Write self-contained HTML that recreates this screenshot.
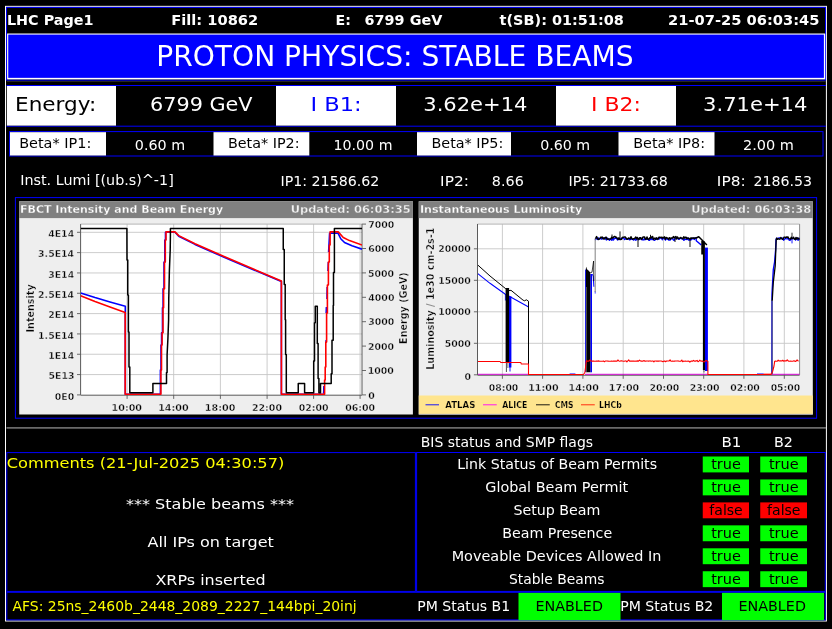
<!DOCTYPE html>
<html lang="en">
<head>
<meta charset="utf-8">
<title>LHC Page1</title>
<style>
html,body{margin:0;padding:0;background:#000;overflow:hidden}
svg{display:block;font-family:"DejaVu Sans","Liberation Sans",sans-serif;will-change:transform;transform:translateZ(0);}
text{white-space:pre}
</style>
</head>
<body>
<svg width="832" height="629" viewBox="0 0 832 629">
<defs>
<clipPath id="cp1"><rect x="80.6" y="224.1" width="281.40" height="171.40"/></clipPath>
<clipPath id="cp2"><rect x="477.5" y="224.1" width="322.10" height="151.50"/></clipPath>
</defs>
<g>
<rect x="0.00" y="0.00" width="832.00" height="629.00" fill="#000" />
<rect x="5.50" y="6.35" width="820.90" height="614.65" fill="none" stroke="#fff" stroke-width="1"/>
<rect x="6.55" y="7.40" width="818.95" height="72.70" fill="none" stroke="#0000ff" stroke-width="1"/>
<line x1="7.00" y1="81.50" x2="826.00" y2="81.50" stroke="#303030" stroke-width="0.8" />
<rect x="7.10" y="33.50" width="818.10" height="45.90" fill="#fff" />
<rect x="8.25" y="34.60" width="815.65" height="43.25" fill="#0000ff" />
<line x1="6.50" y1="85.45" x2="826.00" y2="85.45" stroke="#0000ff" stroke-width="1.1" />
<line x1="6.50" y1="126.20" x2="826.00" y2="126.20" stroke="#0000ff" stroke-width="1" />
<rect x="6.80" y="86.00" width="109.20" height="39.60" fill="#fff" />
<rect x="276.00" y="86.00" width="120.00" height="39.60" fill="#fff" />
<rect x="556.00" y="86.00" width="120.00" height="39.60" fill="#fff" />
<rect x="9.60" y="131.60" width="813.40" height="24.40" fill="none" stroke="#0000ff" stroke-width="1"/>
<rect x="10.00" y="132.20" width="96.00" height="23.30" fill="#fff" />
<rect x="213.50" y="132.20" width="95.80" height="23.30" fill="#fff" />
<rect x="417.00" y="132.20" width="94.00" height="23.30" fill="#fff" />
<rect x="618.50" y="132.20" width="96.00" height="23.30" fill="#fff" />
<rect x="15.40" y="197.60" width="801.20" height="220.60" fill="none" stroke="#0000ff" stroke-width="1"/>
<rect x="19.20" y="201.30" width="393.70" height="213.20" fill="#eeeeee" />
<rect x="19.20" y="201.30" width="393.70" height="16.80" fill="#808080" />
<rect x="80.60" y="224.10" width="281.40" height="170.80" fill="#fff" />
<line x1="127.10" y1="224.10" x2="127.10" y2="394.90" stroke="#c6c6c6" stroke-width="0.9" />
<line x1="173.70" y1="224.10" x2="173.70" y2="394.90" stroke="#c6c6c6" stroke-width="0.9" />
<line x1="220.40" y1="224.10" x2="220.40" y2="394.90" stroke="#c6c6c6" stroke-width="0.9" />
<line x1="267.10" y1="224.10" x2="267.10" y2="394.90" stroke="#c6c6c6" stroke-width="0.9" />
<line x1="313.60" y1="224.10" x2="313.60" y2="394.90" stroke="#c6c6c6" stroke-width="0.9" />
<line x1="360.10" y1="224.10" x2="360.10" y2="394.90" stroke="#c6c6c6" stroke-width="0.9" />
<line x1="80.60" y1="374.57" x2="362.00" y2="374.57" stroke="#c6c6c6" stroke-width="0.9" />
<line x1="80.60" y1="354.25" x2="362.00" y2="354.25" stroke="#c6c6c6" stroke-width="0.9" />
<line x1="80.60" y1="333.93" x2="362.00" y2="333.93" stroke="#c6c6c6" stroke-width="0.9" />
<line x1="80.60" y1="313.60" x2="362.00" y2="313.60" stroke="#c6c6c6" stroke-width="0.9" />
<line x1="80.60" y1="293.27" x2="362.00" y2="293.27" stroke="#c6c6c6" stroke-width="0.9" />
<line x1="80.60" y1="272.95" x2="362.00" y2="272.95" stroke="#c6c6c6" stroke-width="0.9" />
<line x1="80.60" y1="252.62" x2="362.00" y2="252.62" stroke="#c6c6c6" stroke-width="0.9" />
<line x1="80.60" y1="232.30" x2="362.00" y2="232.30" stroke="#c6c6c6" stroke-width="0.9" />
<line x1="80.60" y1="224.10" x2="362.00" y2="224.10" stroke="#b4b4b4" stroke-width="1" />
<line x1="80.60" y1="224.10" x2="80.60" y2="394.90" stroke="#5a5a5a" stroke-width="1" />
<line x1="362.00" y1="224.10" x2="362.00" y2="394.90" stroke="#5a5a5a" stroke-width="1" />
<line x1="80.60" y1="395.20" x2="362.00" y2="395.20" stroke="#5a5a5a" stroke-width="1" />
<polyline points="80.60,293.00 95.00,297.60 110.00,302.00 125.30,306.30 125.30,394.30 159.50,394.30 160.40,394.30 160.40,370.00 161.00,370.00 161.00,345.00 161.60,345.00 161.60,332.80 162.50,332.80 162.50,307.70 163.10,307.70 163.10,288.80 164.00,288.80 164.00,262.00 164.80,262.00 164.80,240.00 165.50,240.00 165.50,232.30 175.00,232.30 178.70,236.20 195.00,244.40 223.50,257.00 281.40,281.60 281.40,394.30 322.60,394.30" fill="none" stroke="#0000ff" stroke-width="1.6" stroke-linejoin="round" clip-path="url(#cp1)"/>
<polyline points="323.20,393.60 323.70,393.00 323.90,386.00" fill="none" stroke="#0000ff" stroke-width="1.6" stroke-linejoin="round" clip-path="url(#cp1)"/>
<polyline points="326.10,342.50 326.20,340.00" fill="none" stroke="#0000ff" stroke-width="1.6" stroke-linejoin="round" clip-path="url(#cp1)"/>
<polyline points="326.20,313.00 326.40,307.00" fill="none" stroke="#0000ff" stroke-width="1.6" stroke-linejoin="round" clip-path="url(#cp1)"/>
<polyline points="327.00,299.00 327.20,287.00" fill="none" stroke="#0000ff" stroke-width="1.6" stroke-linejoin="round" clip-path="url(#cp1)"/>
<polyline points="328.00,271.00 328.40,262.00" fill="none" stroke="#0000ff" stroke-width="1.6" stroke-linejoin="round" clip-path="url(#cp1)"/>
<polyline points="328.60,252.00 329.60,233.40 330.40,233.10 338.00,233.10 340.75,238.75 344.50,242.50 352.00,245.70 362.00,249.20" fill="none" stroke="#0000ff" stroke-width="1.6" stroke-linejoin="round" clip-path="url(#cp1)"/>
<polyline points="80.60,295.80 95.00,301.60 110.00,307.00 125.20,312.50 125.20,394.30 159.80,394.30 160.90,394.30 160.90,370.00 161.50,370.00 161.50,345.00 162.10,345.00 162.10,332.80 163.00,332.80 163.00,307.70 163.60,307.70 163.60,288.80 164.50,288.80 164.50,262.00 165.30,262.00 165.30,240.00 166.00,240.00 166.00,231.90 175.00,231.90 178.75,235.60 195.00,243.75 223.50,256.25 281.40,281.00 281.40,394.30 323.20,394.30 324.60,394.30 324.60,380.00 325.20,380.00 325.20,367.00 325.80,367.00 325.80,342.00 326.60,342.00 326.60,313.00 327.40,313.00 327.40,285.00 328.40,285.00 328.40,262.00 329.30,262.00 329.30,245.00 330.10,245.00 330.10,231.90 338.25,231.90 343.25,237.50 349.50,240.60 362.00,245.00" fill="none" stroke="#ff0000" stroke-width="1.6" stroke-linejoin="round" clip-path="url(#cp1)"/>
<polyline points="80.60,228.50 126.90,228.50 127.00,260.00 127.75,260.00 127.75,295.00 128.40,295.00 128.40,332.00 129.00,332.00 129.00,367.00 129.80,367.00 129.80,392.70 152.90,392.70 152.90,383.40 166.50,383.40 166.50,372.50 167.10,372.50 167.10,355.00 167.90,338.75 168.60,320.00 168.75,299.00 169.40,270.00 170.20,250.00 170.40,236.00 170.40,228.50 283.25,228.50 283.25,249.40 284.25,249.40 284.25,284.40 285.20,284.40 285.20,319.70 285.60,319.70 285.60,354.60 286.30,354.60 286.30,392.70 298.25,392.70 298.25,383.40 304.60,383.40 304.60,392.70 313.70,392.70 313.70,361.00 314.50,361.00 314.50,322.80 315.25,322.80 315.25,306.20 317.30,306.20 317.30,343.50 318.10,343.50 318.10,378.50 318.90,378.50 318.90,392.70 320.50,392.70 320.50,383.40 331.20,383.40 331.20,373.70 332.00,373.70 332.00,340.30 333.20,340.30 333.20,305.40 333.50,305.40 333.50,272.50 334.40,272.50 334.40,228.50 362.00,228.50" fill="none" stroke="#000000" stroke-width="1.5" stroke-linejoin="round" clip-path="url(#cp1)"/>
<line x1="77.00" y1="394.90" x2="80.60" y2="394.90" stroke="#5a5a5a" stroke-width="0.9" />
<line x1="77.00" y1="374.57" x2="80.60" y2="374.57" stroke="#5a5a5a" stroke-width="0.9" />
<line x1="77.00" y1="354.25" x2="80.60" y2="354.25" stroke="#5a5a5a" stroke-width="0.9" />
<line x1="77.00" y1="333.93" x2="80.60" y2="333.93" stroke="#5a5a5a" stroke-width="0.9" />
<line x1="77.00" y1="313.60" x2="80.60" y2="313.60" stroke="#5a5a5a" stroke-width="0.9" />
<line x1="77.00" y1="293.27" x2="80.60" y2="293.27" stroke="#5a5a5a" stroke-width="0.9" />
<line x1="77.00" y1="272.95" x2="80.60" y2="272.95" stroke="#5a5a5a" stroke-width="0.9" />
<line x1="77.00" y1="252.62" x2="80.60" y2="252.62" stroke="#5a5a5a" stroke-width="0.9" />
<line x1="77.00" y1="232.30" x2="80.60" y2="232.30" stroke="#5a5a5a" stroke-width="0.9" />
<line x1="127.10" y1="394.90" x2="127.10" y2="398.90" stroke="#5a5a5a" stroke-width="0.9" />
<line x1="173.70" y1="394.90" x2="173.70" y2="398.90" stroke="#5a5a5a" stroke-width="0.9" />
<line x1="220.40" y1="394.90" x2="220.40" y2="398.90" stroke="#5a5a5a" stroke-width="0.9" />
<line x1="267.10" y1="394.90" x2="267.10" y2="398.90" stroke="#5a5a5a" stroke-width="0.9" />
<line x1="313.60" y1="394.90" x2="313.60" y2="398.90" stroke="#5a5a5a" stroke-width="0.9" />
<line x1="360.10" y1="394.90" x2="360.10" y2="398.90" stroke="#5a5a5a" stroke-width="0.9" />
<line x1="362.00" y1="394.90" x2="366.00" y2="394.90" stroke="#5a5a5a" stroke-width="0.9" />
<line x1="362.00" y1="370.50" x2="366.00" y2="370.50" stroke="#5a5a5a" stroke-width="0.9" />
<line x1="362.00" y1="346.10" x2="366.00" y2="346.10" stroke="#5a5a5a" stroke-width="0.9" />
<line x1="362.00" y1="321.70" x2="366.00" y2="321.70" stroke="#5a5a5a" stroke-width="0.9" />
<line x1="362.00" y1="297.30" x2="366.00" y2="297.30" stroke="#5a5a5a" stroke-width="0.9" />
<line x1="362.00" y1="272.90" x2="366.00" y2="272.90" stroke="#5a5a5a" stroke-width="0.9" />
<line x1="362.00" y1="248.50" x2="366.00" y2="248.50" stroke="#5a5a5a" stroke-width="0.9" />
<line x1="362.00" y1="224.10" x2="366.00" y2="224.10" stroke="#5a5a5a" stroke-width="0.9" />
<rect x="418.75" y="201.30" width="394.05" height="213.20" fill="#eeeeee" />
<rect x="418.75" y="201.30" width="394.05" height="16.80" fill="#808080" />
<rect x="477.50" y="224.10" width="322.10" height="150.70" fill="#fff" />
<line x1="502.40" y1="224.10" x2="502.40" y2="374.80" stroke="#c6c6c6" stroke-width="0.9" />
<line x1="542.60" y1="224.10" x2="542.60" y2="374.80" stroke="#c6c6c6" stroke-width="0.9" />
<line x1="582.90" y1="224.10" x2="582.90" y2="374.80" stroke="#c6c6c6" stroke-width="0.9" />
<line x1="623.20" y1="224.10" x2="623.20" y2="374.80" stroke="#c6c6c6" stroke-width="0.9" />
<line x1="663.50" y1="224.10" x2="663.50" y2="374.80" stroke="#c6c6c6" stroke-width="0.9" />
<line x1="703.70" y1="224.10" x2="703.70" y2="374.80" stroke="#c6c6c6" stroke-width="0.9" />
<line x1="743.90" y1="224.10" x2="743.90" y2="374.80" stroke="#c6c6c6" stroke-width="0.9" />
<line x1="784.30" y1="224.10" x2="784.30" y2="374.80" stroke="#c6c6c6" stroke-width="0.9" />
<line x1="477.50" y1="343.30" x2="799.60" y2="343.30" stroke="#c6c6c6" stroke-width="0.9" />
<line x1="477.50" y1="311.80" x2="799.60" y2="311.80" stroke="#c6c6c6" stroke-width="0.9" />
<line x1="477.50" y1="280.30" x2="799.60" y2="280.30" stroke="#c6c6c6" stroke-width="0.9" />
<line x1="477.50" y1="248.80" x2="799.60" y2="248.80" stroke="#c6c6c6" stroke-width="0.9" />
<line x1="477.50" y1="224.10" x2="799.60" y2="224.10" stroke="#b4b4b4" stroke-width="1" />
<line x1="477.50" y1="224.10" x2="477.50" y2="374.80" stroke="#5a5a5a" stroke-width="1" />
<line x1="799.60" y1="224.10" x2="799.60" y2="374.80" stroke="#8a8a8a" stroke-width="1" />
<line x1="477.50" y1="375.30" x2="799.60" y2="375.30" stroke="#5a5a5a" stroke-width="0.9" />
<polyline points="477.50,273.40 490.00,283.30 505.00,294.00 511.00,297.30 528.20,306.80 528.50,307.00 528.50,374.00" fill="none" stroke="#0000ff" stroke-width="1.05" stroke-linejoin="round" clip-path="url(#cp2)"/>
<rect x="504.90" y="294.00" width="0.90" height="6.50" fill="#0000ff" />
<rect x="509.00" y="296.30" width="2.40" height="71.20" fill="#0000ff" />
<line x1="510.00" y1="367.00" x2="510.00" y2="371.50" stroke="#0000ff" stroke-width="0.9" />
<rect x="585.00" y="269.60" width="0.90" height="102.40" fill="#0000ff" />
<rect x="590.30" y="274.00" width="1.70" height="98.30" fill="#0000ff" />
<polyline points="592.00,274.00 593.20,276.00 593.90,286.80" fill="none" stroke="#0000ff" stroke-width="1.0" stroke-linejoin="round" clip-path="url(#cp2)"/>
<line x1="595.20" y1="291.00" x2="595.20" y2="293.60" stroke="#4a4aff" stroke-width="1.0" />
<polyline points="595.30,240.20 595.90,238.64 596.70,238.19 597.50,239.49 598.30,237.99 599.10,239.19 599.90,238.75 600.70,237.95 601.50,239.12 602.30,237.90 603.10,238.93 603.90,237.98 604.70,238.04 605.50,238.90 606.30,239.95 607.10,238.12 607.90,238.38 608.70,239.43 609.50,240.26 610.30,239.30 611.10,238.83 611.90,240.34 612.70,237.92 613.50,240.03 614.30,238.55 615.10,238.18 615.90,238.11 616.70,238.60 617.50,239.92 618.30,238.27 619.10,239.31 619.90,239.46 620.70,238.77 621.50,239.22 622.30,237.96 623.10,237.95 623.90,238.34 624.70,239.57 625.50,238.91 626.30,238.62 627.10,239.32 627.90,238.98 628.70,238.58 629.50,239.87 630.30,239.62 631.10,238.43 631.90,239.29 632.70,239.17 633.50,240.08 634.30,239.70 635.10,238.55 635.90,240.35 636.70,238.11 637.50,238.89 638.30,239.77 639.10,238.20 639.90,239.07 640.70,237.90 641.50,239.54 642.30,239.79 643.10,239.29 643.90,240.08 644.70,238.62 645.50,239.61 646.30,239.35 647.10,239.31 647.90,238.99 648.70,239.98 649.50,240.26 650.30,239.03 651.10,239.53 651.90,237.96 652.70,239.62 653.50,239.48 654.30,240.38 655.10,239.94 655.90,238.54 656.70,238.80 657.50,239.54 658.30,237.86 659.10,239.00 659.90,238.24 660.70,238.10 661.50,237.95 662.30,239.80 663.10,238.14 663.90,238.44 664.70,238.82 665.50,240.07 666.30,238.01 667.10,238.97 667.90,239.23 668.70,240.10 669.50,239.93 670.30,240.05 671.10,238.52 671.90,238.88 672.70,238.73 673.50,240.10 674.30,240.29 675.10,238.19 675.90,238.26 676.70,238.40 677.50,238.41 678.30,239.06 679.10,239.33 679.90,238.48 680.70,237.81 681.50,238.89 682.30,238.76 683.10,239.27 683.90,240.28 684.70,239.60 685.50,239.14 686.30,239.41 687.10,239.56 687.90,237.94 688.70,240.14 689.50,239.83 690.30,240.07 691.10,239.87 691.90,238.82 692.70,238.84 693.50,238.07 694.30,239.45 695.10,237.96 695.90,237.98 696.20,239.10 696.25,240.75 701.25,245.00" fill="none" stroke="#0000ff" stroke-width="1.4" stroke-linejoin="round" clip-path="url(#cp2)"/>
<rect x="705.00" y="247.60" width="2.90" height="123.40" fill="#0000ff" />
<polyline points="771.90,374.00 772.00,293.60 773.30,269.70 774.60,262.00 775.60,250.00 776.00,240.00 776.40,238.44 777.20,238.32 778.00,238.78 778.80,238.04 779.60,237.90 780.40,238.29 781.20,238.16 782.00,238.85 782.80,237.97 783.60,240.17 784.40,239.50 785.20,238.29 786.00,238.56 786.80,238.80 787.60,238.85 788.40,238.22 789.20,240.11 790.00,240.48 790.80,239.11 791.60,239.16 792.40,238.12 793.20,238.17 794.00,238.79 794.80,238.59 795.60,240.06 796.40,238.32 797.20,237.96 798.00,240.37 798.80,239.27 799.60,238.28 799.60,239.20" fill="none" stroke="#0000ff" stroke-width="1.4" stroke-linejoin="round" clip-path="url(#cp2)"/>
<line x1="792.00" y1="238.20" x2="792.00" y2="243.40" stroke="#0000ff" stroke-width="0.9" />
<line x1="569.60" y1="374.10" x2="575.40" y2="374.10" stroke="#0000ff" stroke-width="1.2" />
<line x1="757.00" y1="374.10" x2="763.70" y2="374.10" stroke="#0000ff" stroke-width="1.2" />
<line x1="477.50" y1="374.30" x2="528.50" y2="374.30" stroke="#cc00cc" stroke-width="1.0" />
<line x1="585.00" y1="374.30" x2="707.90" y2="374.30" stroke="#cc00cc" stroke-width="1.0" />
<line x1="771.00" y1="374.30" x2="799.60" y2="374.30" stroke="#cc00cc" stroke-width="1.0" />
<polyline points="477.50,264.75 490.00,276.00 505.30,288.40 508.80,290.60 511.00,290.30 523.10,300.20 524.70,300.80 526.30,299.80 528.50,301.20 528.50,374.50" fill="none" stroke="#000" stroke-width="1.0" stroke-linejoin="round" clip-path="url(#cp2)"/>
<rect x="505.60" y="288.00" width="3.50" height="74.00" fill="#000" />
<line x1="506.40" y1="362.00" x2="506.40" y2="372.00" stroke="#000" stroke-width="0.7" />
<line x1="507.90" y1="362.00" x2="507.90" y2="368.00" stroke="#000" stroke-width="0.6" />
<polygon points="585.9,372.3 585.9,268.2 586.2,266.8 587.0,269.2 588.5,270.6 590.3,272.6 590.3,372.3" fill="#000"/>
<line x1="586.35" y1="287.00" x2="586.35" y2="372.00" stroke="#c8c8c8" stroke-width="0.45" />
<polyline points="590.30,272.60 592.00,272.20 593.60,261.00 593.85,281.00" fill="none" stroke="#000" stroke-width="0.75" stroke-linejoin="round" clip-path="url(#cp2)"/>
<line x1="595.20" y1="292.00" x2="595.20" y2="238.20" stroke="#8c8c8c" stroke-width="1.1" />
<polyline points="595.20,238.20 595.80,238.13 596.60,236.58 597.40,238.08 598.20,239.44 599.00,239.09 599.80,238.59 600.60,237.28 601.40,237.60 602.20,237.00 603.00,238.82 603.80,238.10 604.60,238.84 605.40,237.49 606.20,237.17 607.00,238.93 607.80,239.45 608.60,239.06 609.40,238.92 610.20,238.95 611.00,238.72 611.80,237.18 612.60,238.05 613.40,237.57 614.20,236.59 615.00,236.58 615.80,237.34 616.60,237.28 617.40,238.58 618.20,239.37 619.00,237.84 619.80,239.31 620.60,239.46 621.40,239.37 622.20,237.59 623.00,237.16 623.80,237.18 624.60,237.09 625.40,237.11 626.20,238.37 627.00,239.20 627.80,239.02 628.60,237.94 629.40,238.46 630.20,238.90 631.00,236.75 631.80,238.48 632.60,239.23 633.40,238.85 634.20,238.75 635.00,237.93 635.80,237.04 636.60,238.87 637.40,237.50 638.20,238.90 639.00,239.41 639.80,237.69 640.60,237.70 641.40,239.34 642.20,238.67 643.00,237.01 643.80,236.88 644.60,236.95 645.40,239.21 646.20,238.92 647.00,236.94 647.80,238.98 648.60,239.44 649.40,238.47 650.20,237.55 651.00,238.15 651.80,236.89 652.60,236.54 653.40,239.41 654.20,238.45 655.00,238.08 655.80,239.30 656.60,237.80 657.40,239.12 658.20,238.98 659.00,237.13 659.80,237.26 660.60,237.38 661.40,237.22 662.20,238.26 663.00,237.28 663.80,237.76 664.60,236.89 665.40,239.23 666.20,237.56 667.00,237.87 667.80,238.25 668.60,239.21 669.40,237.76 670.20,239.25 671.00,238.00 671.80,238.10 672.60,238.07 673.40,236.56 674.20,237.82 675.00,237.05 675.80,236.51 676.60,238.90 677.40,237.02 678.20,237.92 679.00,238.68 679.80,238.17 680.60,237.48 681.40,238.06 682.20,238.17 683.00,238.85 683.80,236.82 684.60,238.18 685.40,237.25 686.20,237.33 687.00,238.82 687.80,238.02 688.60,238.19 689.40,238.78 690.20,239.24 691.00,237.83 691.80,238.34 692.60,238.02 693.40,238.04 694.20,238.58 695.00,237.86 695.80,238.10 696.20,238.00 698.75,236.75 702.50,240.50 706.90,245.00" fill="none" stroke="#000" stroke-width="1.5" stroke-linejoin="round" clip-path="url(#cp2)"/>
<line x1="620.00" y1="238.20" x2="620.00" y2="231.40" stroke="#000" stroke-width="0.95" />
<line x1="638.00" y1="238.20" x2="638.00" y2="247.00" stroke="#000" stroke-width="0.95" />
<line x1="690.00" y1="238.20" x2="690.00" y2="247.00" stroke="#000" stroke-width="0.95" />
<line x1="612.00" y1="238.20" x2="612.00" y2="234.50" stroke="#000" stroke-width="0.95" />
<line x1="650.50" y1="238.20" x2="650.50" y2="234.80" stroke="#000" stroke-width="0.95" />
<line x1="675.00" y1="238.20" x2="675.00" y2="242.00" stroke="#000" stroke-width="0.95" />
<polygon points="701.25,240.75 704.9,241.6 705.0,370 702.9,370 702.9,254.5 701.25,254.5" fill="#000"/>
<line x1="704.00" y1="370.00" x2="704.00" y2="372.50" stroke="#000" stroke-width="0.6" />
<polyline points="772.20,301.00 773.30,282.30 775.20,266.00 776.20,239.60 776.80,238.04 777.60,239.34 778.40,238.66 779.20,239.15 780.00,239.34 780.80,237.43 781.60,238.27 782.40,239.34 783.20,239.05 784.00,237.08 784.80,237.04 785.60,237.94 786.40,236.90 787.20,237.37 788.00,236.90 788.80,238.57 789.60,238.90 790.40,239.21 791.20,237.13 792.00,238.71 792.80,238.55 793.60,237.10 794.40,239.17 795.20,239.41 796.00,237.31 796.80,239.37 797.60,237.82 798.40,238.06 799.20,239.47 799.60,238.10" fill="none" stroke="#000" stroke-width="1.3" stroke-linejoin="round" clip-path="url(#cp2)"/>
<line x1="792.00" y1="238.20" x2="792.00" y2="232.70" stroke="#000" stroke-width="0.8" />
<line x1="772.10" y1="374.50" x2="772.10" y2="300.00" stroke="#555" stroke-width="0.9" />
<polyline points="477.50,361.50 500.00,361.50 500.80,362.40 520.90,362.50 521.20,363.90 528.50,364.00 528.50,374.50 583.50,374.50 584.90,372.50 585.70,366.00 586.30,360.90 587.30,361.12 588.20,361.14 589.10,360.93 590.00,359.91 590.90,360.99 591.80,361.09 592.70,361.09 593.60,360.96 594.50,361.25 595.40,361.20 596.30,360.93 597.20,361.14 598.10,360.91 599.00,361.09 599.90,361.25 600.80,361.27 601.70,361.22 602.60,361.27 603.50,360.94 604.40,361.73 605.30,361.07 606.20,361.02 607.10,361.05 608.00,361.13 608.90,361.26 609.80,361.27 610.70,361.30 611.60,360.97 612.50,361.29 613.40,361.13 614.30,360.98 615.20,361.13 616.10,360.93 617.00,361.30 617.90,359.94 618.80,360.96 619.70,361.21 620.60,360.92 621.50,360.92 622.40,361.03 623.30,361.29 624.20,361.30 625.10,360.93 626.00,360.91 626.90,361.84 627.80,360.96 628.70,359.89 629.60,361.28 630.50,361.05 631.40,361.11 632.30,361.14 633.20,361.15 634.10,361.10 635.00,361.19 635.90,361.02 636.80,361.11 637.70,360.90 638.60,361.13 639.50,360.07 640.40,360.92 641.30,361.09 642.20,361.04 643.10,361.20 644.00,360.46 644.90,361.29 645.80,361.08 646.70,361.03 647.60,361.03 648.50,361.14 649.40,361.05 650.30,360.91 651.20,361.19 652.10,360.99 653.00,361.00 653.90,361.86 654.80,360.94 655.70,361.03 656.60,361.08 657.50,360.97 658.40,361.16 659.30,361.08 660.20,360.95 661.10,360.98 662.00,361.24 662.90,361.77 663.80,361.16 664.70,361.04 665.60,361.78 666.50,361.01 667.40,361.07 668.30,361.06 669.20,360.96 670.10,359.84 671.00,361.29 671.90,361.28 672.80,360.99 673.70,361.23 674.60,361.11 675.50,361.04 676.40,360.93 677.30,361.01 678.20,360.92 679.10,361.18 680.00,361.26 680.90,361.13 681.80,359.98 682.70,361.78 683.60,361.11 684.50,361.28 685.40,361.04 686.30,361.24 687.20,361.21 688.10,360.98 689.00,361.23 689.90,362.08 690.80,361.22 691.70,360.90 692.60,361.25 693.50,360.31 694.40,361.11 695.30,361.09 696.20,360.90 697.10,360.41 698.00,361.64 698.90,361.24 699.80,360.15 700.70,361.03 701.60,361.16 702.50,361.04 703.40,361.80 704.30,361.93 705.20,361.05 706.10,360.38 707.00,361.14 707.60,361.10 707.90,361.20 707.90,374.50 771.00,374.50 772.60,371.50 774.00,366.00 774.70,361.20 775.50,361.10 776.40,361.18 777.30,361.17 778.20,360.07 779.10,361.06 780.00,360.85 780.90,360.90 781.80,361.03 782.70,360.25 783.60,361.17 784.50,360.86 785.40,360.86 786.30,360.85 787.20,359.79 788.10,360.89 789.00,361.15 789.90,361.18 790.80,361.07 791.70,361.18 792.60,361.19 793.50,360.92 794.40,360.87 795.30,361.54 796.20,361.04 797.10,359.93 798.00,360.92 798.70,361.00" fill="none" stroke="#ff0000" stroke-width="1.1" stroke-linejoin="round" clip-path="url(#cp2)"/>
<line x1="763.70" y1="374.30" x2="771.00" y2="374.30" stroke="#ff0000" stroke-width="1.3" />
<line x1="477.50" y1="224.10" x2="477.50" y2="374.80" stroke="#5a5a5a" stroke-width="1" />
<line x1="473.90" y1="374.80" x2="477.50" y2="374.80" stroke="#5a5a5a" stroke-width="0.9" />
<line x1="473.90" y1="343.30" x2="477.50" y2="343.30" stroke="#5a5a5a" stroke-width="0.9" />
<line x1="473.90" y1="311.80" x2="477.50" y2="311.80" stroke="#5a5a5a" stroke-width="0.9" />
<line x1="473.90" y1="280.30" x2="477.50" y2="280.30" stroke="#5a5a5a" stroke-width="0.9" />
<line x1="473.90" y1="248.80" x2="477.50" y2="248.80" stroke="#5a5a5a" stroke-width="0.9" />
<line x1="502.40" y1="374.80" x2="502.40" y2="378.80" stroke="#5a5a5a" stroke-width="0.9" />
<line x1="542.60" y1="374.80" x2="542.60" y2="378.80" stroke="#5a5a5a" stroke-width="0.9" />
<line x1="582.90" y1="374.80" x2="582.90" y2="378.80" stroke="#5a5a5a" stroke-width="0.9" />
<line x1="623.20" y1="374.80" x2="623.20" y2="378.80" stroke="#5a5a5a" stroke-width="0.9" />
<line x1="663.50" y1="374.80" x2="663.50" y2="378.80" stroke="#5a5a5a" stroke-width="0.9" />
<line x1="703.70" y1="374.80" x2="703.70" y2="378.80" stroke="#5a5a5a" stroke-width="0.9" />
<line x1="743.90" y1="374.80" x2="743.90" y2="378.80" stroke="#5a5a5a" stroke-width="0.9" />
<line x1="784.30" y1="374.80" x2="784.30" y2="378.80" stroke="#5a5a5a" stroke-width="0.9" />
<rect x="418.75" y="395.50" width="394.05" height="18.60" fill="#ffe58e" />
<line x1="418.75" y1="414.30" x2="812.80" y2="414.30" stroke="#b8bcc8" stroke-width="0.7" />
<line x1="425.50" y1="404.80" x2="439.00" y2="404.80" stroke="#0000ff" stroke-width="0.9" />
<line x1="483.00" y1="404.80" x2="496.75" y2="404.80" stroke="#ff00ff" stroke-width="0.9" />
<line x1="536.00" y1="404.80" x2="549.75" y2="404.80" stroke="#000000" stroke-width="0.9" />
<line x1="581.00" y1="404.80" x2="594.75" y2="404.80" stroke="#ff1800" stroke-width="0.9" />
<line x1="6.50" y1="427.80" x2="826.00" y2="427.80" stroke="#6a6a6a" stroke-width="1.8" />
<rect x="6.80" y="452.60" width="408.60" height="138.80" fill="none" stroke="#0000ff" stroke-width="1"/>
<rect x="416.60" y="452.50" width="408.70" height="138.90" fill="none" stroke="#0000ff" stroke-width="1"/>
<rect x="702.75" y="456.50" width="46.25" height="15.90" fill="#00ff00" />
<rect x="760.25" y="456.50" width="46.75" height="15.90" fill="#00ff00" />
<rect x="702.75" y="479.45" width="46.25" height="15.90" fill="#00ff00" />
<rect x="760.25" y="479.45" width="46.75" height="15.90" fill="#00ff00" />
<rect x="702.75" y="502.40" width="46.25" height="15.90" fill="#ff0000" />
<rect x="760.25" y="502.40" width="46.75" height="15.90" fill="#ff0000" />
<rect x="702.75" y="525.35" width="46.25" height="15.90" fill="#00ff00" />
<rect x="760.25" y="525.35" width="46.75" height="15.90" fill="#00ff00" />
<rect x="702.75" y="548.30" width="46.25" height="15.90" fill="#00ff00" />
<rect x="760.25" y="548.30" width="46.75" height="15.90" fill="#00ff00" />
<rect x="702.75" y="571.25" width="46.25" height="15.90" fill="#00ff00" />
<rect x="760.25" y="571.25" width="46.75" height="15.90" fill="#00ff00" />
<rect x="6.80" y="592.30" width="818.50" height="27.60" fill="none" stroke="#0000ff" stroke-width="1"/>
<rect x="518.50" y="592.90" width="102.00" height="27.30" fill="#00ff00" />
<rect x="722.00" y="592.90" width="102.00" height="27.30" fill="#00ff00" />
</g>
<g>
<text x="6.96" y="24.75" fill="#fff" textLength="86.49" lengthAdjust="spacingAndGlyphs" style="font-size:13.6px;font-weight:bold;">LHC Page1</text>
<text x="171.18" y="24.75" fill="#fff" textLength="87.08" lengthAdjust="spacingAndGlyphs" style="font-size:13.6px;font-weight:bold;">Fill: 10862</text>
<text x="335.48" y="24.75" fill="#fff" textLength="15.33" lengthAdjust="spacingAndGlyphs" style="font-size:13.6px;font-weight:bold;">E:</text>
<text x="364.64" y="24.75" fill="#fff" textLength="77.67" lengthAdjust="spacingAndGlyphs" style="font-size:13.6px;font-weight:bold;">6799 GeV</text>
<text x="499.61" y="24.75" fill="#fff" textLength="124.20" lengthAdjust="spacingAndGlyphs" style="font-size:13.6px;font-weight:bold;">t(SB): 01:51:08</text>
<text x="667.97" y="24.75" fill="#fff" textLength="151.49" lengthAdjust="spacingAndGlyphs" style="font-size:13.6px;font-weight:bold;">21-07-25 06:03:45</text>
<text x="156.22" y="65.50" fill="#fff" textLength="477.32" lengthAdjust="spacingAndGlyphs" style="font-size:28px;">PROTON PHYSICS: STABLE BEAMS</text>
<text x="15.06" y="110.70" fill="#000" textLength="81.14" lengthAdjust="spacingAndGlyphs" style="font-size:20px;">Energy:</text>
<text x="150.00" y="110.70" fill="#fff" textLength="102.58" lengthAdjust="spacingAndGlyphs" style="font-size:20px;">6799 GeV</text>
<text x="310.47" y="110.70" fill="#0000ff" textLength="51.19" lengthAdjust="spacingAndGlyphs" style="font-size:20px;">I B1:</text>
<text x="423.28" y="110.70" fill="#fff" textLength="104.20" lengthAdjust="spacingAndGlyphs" style="font-size:20px;">3.62e+14</text>
<text x="591.03" y="110.70" fill="#ff0000" textLength="49.82" lengthAdjust="spacingAndGlyphs" style="font-size:20px;">I B2:</text>
<text x="703.02" y="110.70" fill="#fff" textLength="104.45" lengthAdjust="spacingAndGlyphs" style="font-size:20px;">3.71e+14</text>
<text x="19.20" y="148.00" fill="#000" textLength="72.09" lengthAdjust="spacingAndGlyphs" style="font-size:13.2px;">Beta* IP1:</text>
<text x="227.96" y="148.00" fill="#000" textLength="71.57" lengthAdjust="spacingAndGlyphs" style="font-size:13.2px;">Beta* IP2:</text>
<text x="431.46" y="148.00" fill="#000" textLength="71.83" lengthAdjust="spacingAndGlyphs" style="font-size:13.2px;">Beta* IP5:</text>
<text x="633.21" y="148.00" fill="#000" textLength="71.83" lengthAdjust="spacingAndGlyphs" style="font-size:13.2px;">Beta* IP8:</text>
<text x="134.89" y="149.80" fill="#fff" textLength="50.31" lengthAdjust="spacingAndGlyphs" style="font-size:13.2px;">0.60 m</text>
<text x="333.58" y="149.80" fill="#fff" textLength="58.86" lengthAdjust="spacingAndGlyphs" style="font-size:13.2px;">10.00 m</text>
<text x="540.15" y="149.80" fill="#fff" textLength="50.05" lengthAdjust="spacingAndGlyphs" style="font-size:13.2px;">0.60 m</text>
<text x="742.99" y="149.80" fill="#fff" textLength="50.98" lengthAdjust="spacingAndGlyphs" style="font-size:13.2px;">2.00 m</text>
<text x="20.21" y="185.00" fill="#fff" textLength="153.54" lengthAdjust="spacingAndGlyphs" style="font-size:13.6px;">Inst. Lumi [(ub.s)^-1]</text>
<text x="280.47" y="186.30" fill="#fff" textLength="98.90" lengthAdjust="spacingAndGlyphs" style="font-size:13.6px;">IP1: 21586.62</text>
<text x="440.12" y="186.30" fill="#fff" textLength="28.78" lengthAdjust="spacingAndGlyphs" style="font-size:13.6px;">IP2:</text>
<text x="491.89" y="186.30" fill="#fff" textLength="31.92" lengthAdjust="spacingAndGlyphs" style="font-size:13.6px;">8.66</text>
<text x="568.46" y="186.30" fill="#fff" textLength="99.48" lengthAdjust="spacingAndGlyphs" style="font-size:13.6px;">IP5: 21733.68</text>
<text x="716.87" y="186.30" fill="#fff" textLength="28.78" lengthAdjust="spacingAndGlyphs" style="font-size:13.6px;">IP8:</text>
<text x="753.51" y="186.30" fill="#fff" textLength="58.57" lengthAdjust="spacingAndGlyphs" style="font-size:13.6px;">2186.53</text>
<text x="20.01" y="213.20" fill="#fff" style="font-size:11px;font-weight:bold;stroke:#808080;stroke-width:0.3px;">FBCT Intensity and Beam Energy</text>
<text x="290.72" y="213.20" fill="#f2f2f2" textLength="120.03" lengthAdjust="spacingAndGlyphs" style="font-size:11px;font-weight:bold;stroke:#808080;stroke-width:0.3px;">Updated: 06:03:35</text>
<text x="54.73" y="399.70" fill="#000" style="font-size:9.4px;font-weight:bold;stroke:#eeeeee;stroke-width:0.35px;">0E0</text>
<text x="48.47" y="379.38" fill="#000" style="font-size:9.4px;font-weight:bold;stroke:#eeeeee;stroke-width:0.35px;">5E13</text>
<text x="48.19" y="359.05" fill="#000" style="font-size:9.4px;font-weight:bold;stroke:#eeeeee;stroke-width:0.35px;">1E14</text>
<text x="38.08" y="338.73" fill="#000" style="font-size:9.4px;font-weight:bold;stroke:#eeeeee;stroke-width:0.35px;">1.5E14</text>
<text x="48.19" y="318.40" fill="#000" style="font-size:9.4px;font-weight:bold;stroke:#eeeeee;stroke-width:0.35px;">2E14</text>
<text x="38.08" y="298.07" fill="#000" style="font-size:9.4px;font-weight:bold;stroke:#eeeeee;stroke-width:0.35px;">2.5E14</text>
<text x="48.19" y="277.75" fill="#000" style="font-size:9.4px;font-weight:bold;stroke:#eeeeee;stroke-width:0.35px;">3E14</text>
<text x="38.08" y="257.43" fill="#000" style="font-size:9.4px;font-weight:bold;stroke:#eeeeee;stroke-width:0.35px;">3.5E14</text>
<text x="48.19" y="237.10" fill="#000" style="font-size:9.4px;font-weight:bold;stroke:#eeeeee;stroke-width:0.35px;">4E14</text>
<text x="111.55" y="410.80" fill="#000" textLength="30.49" lengthAdjust="spacingAndGlyphs" style="font-size:9.4px;font-weight:bold;stroke:#eeeeee;stroke-width:0.35px;">10:00</text>
<text x="158.15" y="410.80" fill="#000" textLength="30.49" lengthAdjust="spacingAndGlyphs" style="font-size:9.4px;font-weight:bold;stroke:#eeeeee;stroke-width:0.35px;">14:00</text>
<text x="204.85" y="410.80" fill="#000" textLength="30.49" lengthAdjust="spacingAndGlyphs" style="font-size:9.4px;font-weight:bold;stroke:#eeeeee;stroke-width:0.35px;">18:00</text>
<text x="251.94" y="410.80" fill="#000" textLength="30.09" lengthAdjust="spacingAndGlyphs" style="font-size:9.4px;font-weight:bold;stroke:#eeeeee;stroke-width:0.35px;">22:00</text>
<text x="298.73" y="410.80" fill="#000" style="font-size:9.4px;font-weight:bold;stroke:#eeeeee;stroke-width:0.35px;">02:00</text>
<text x="345.23" y="410.80" fill="#000" style="font-size:9.4px;font-weight:bold;stroke:#eeeeee;stroke-width:0.35px;">06:00</text>
<text x="368.32" y="398.50" fill="#000" style="font-size:9.4px;font-weight:bold;stroke:#eeeeee;stroke-width:0.35px;">0</text>
<text x="367.67" y="374.10" fill="#000" style="font-size:9.4px;font-weight:bold;stroke:#eeeeee;stroke-width:0.35px;">1000</text>
<text x="368.04" y="349.70" fill="#000" style="font-size:9.4px;font-weight:bold;stroke:#eeeeee;stroke-width:0.35px;">2000</text>
<text x="368.14" y="325.30" fill="#000" style="font-size:9.4px;font-weight:bold;stroke:#eeeeee;stroke-width:0.35px;">3000</text>
<text x="368.32" y="300.90" fill="#000" style="font-size:9.4px;font-weight:bold;stroke:#eeeeee;stroke-width:0.35px;">4000</text>
<text x="368.04" y="276.50" fill="#000" style="font-size:9.4px;font-weight:bold;stroke:#eeeeee;stroke-width:0.35px;">5000</text>
<text x="368.14" y="252.10" fill="#000" style="font-size:9.4px;font-weight:bold;stroke:#eeeeee;stroke-width:0.35px;">6000</text>
<text x="368.14" y="227.70" fill="#000" style="font-size:9.4px;font-weight:bold;stroke:#eeeeee;stroke-width:0.35px;">7000</text>
<text transform="translate(30.00,308.00) rotate(-90)" x="-24.47" y="3.50" fill="#000" style="font-size:9.6px;font-weight:bold;stroke:#eeeeee;stroke-width:0.35px;">Intensity</text>
<text transform="translate(403.50,308.00) rotate(-90)" x="-35.91" y="3.50" fill="#000" style="font-size:9.6px;font-weight:bold;stroke:#eeeeee;stroke-width:0.35px;">Energy (GeV)</text>
<text x="420.00" y="213.20" fill="#fff" textLength="162.18" lengthAdjust="spacingAndGlyphs" style="font-size:11px;font-weight:bold;stroke:#808080;stroke-width:0.3px;">Instantaneous Luminosity</text>
<text x="691.22" y="213.20" fill="#f2f2f2" textLength="119.91" lengthAdjust="spacingAndGlyphs" style="font-size:11px;font-weight:bold;stroke:#808080;stroke-width:0.3px;">Updated: 06:03:38</text>
<text x="464.39" y="379.50" fill="#000" style="font-size:9.4px;font-weight:bold;stroke:#eeeeee;stroke-width:0.35px;">0</text>
<text x="444.77" y="346.70" fill="#000" style="font-size:9.4px;font-weight:bold;stroke:#eeeeee;stroke-width:0.35px;">5000</text>
<text x="438.23" y="315.20" fill="#000" style="font-size:9.4px;font-weight:bold;stroke:#eeeeee;stroke-width:0.35px;">10000</text>
<text x="438.23" y="283.70" fill="#000" style="font-size:9.4px;font-weight:bold;stroke:#eeeeee;stroke-width:0.35px;">15000</text>
<text x="438.23" y="252.20" fill="#000" style="font-size:9.4px;font-weight:bold;stroke:#eeeeee;stroke-width:0.35px;">20000</text>
<text x="488.73" y="390.60" fill="#000" textLength="29.60" lengthAdjust="spacingAndGlyphs" style="font-size:9.4px;font-weight:bold;stroke:#eeeeee;stroke-width:0.35px;">08:00</text>
<text x="528.25" y="390.60" fill="#000" textLength="30.28" lengthAdjust="spacingAndGlyphs" style="font-size:9.4px;font-weight:bold;stroke:#eeeeee;stroke-width:0.35px;">11:00</text>
<text x="568.55" y="390.60" fill="#000" textLength="30.28" lengthAdjust="spacingAndGlyphs" style="font-size:9.4px;font-weight:bold;stroke:#eeeeee;stroke-width:0.35px;">14:00</text>
<text x="608.85" y="390.60" fill="#000" textLength="30.28" lengthAdjust="spacingAndGlyphs" style="font-size:9.4px;font-weight:bold;stroke:#eeeeee;stroke-width:0.35px;">17:00</text>
<text x="649.54" y="390.60" fill="#000" style="font-size:9.4px;font-weight:bold;stroke:#eeeeee;stroke-width:0.35px;">20:00</text>
<text x="689.74" y="390.60" fill="#000" style="font-size:9.4px;font-weight:bold;stroke:#eeeeee;stroke-width:0.35px;">23:00</text>
<text x="730.23" y="390.60" fill="#000" textLength="29.60" lengthAdjust="spacingAndGlyphs" style="font-size:9.4px;font-weight:bold;stroke:#eeeeee;stroke-width:0.35px;">02:00</text>
<text x="770.63" y="390.60" fill="#000" textLength="29.60" lengthAdjust="spacingAndGlyphs" style="font-size:9.4px;font-weight:bold;stroke:#eeeeee;stroke-width:0.35px;">05:00</text>
<text transform="translate(430.20,298.50) rotate(-90)" x="-71.29" y="3.50" fill="#000" style="font-size:9.6px;font-weight:bold;stroke:#eeeeee;stroke-width:0.35px;">Luminosity / 1e30 cm-2s-1</text>
<text x="445.25" y="407.60" fill="#000" textLength="30.10" lengthAdjust="spacingAndGlyphs" style="font-size:8.3px;font-weight:bold;stroke:#ffe58e;stroke-width:0.2px;">ATLAS</text>
<text x="502.25" y="407.60" fill="#000" textLength="25.07" lengthAdjust="spacingAndGlyphs" style="font-size:8.3px;font-weight:bold;stroke:#ffe58e;stroke-width:0.2px;">ALICE</text>
<text x="554.95" y="407.60" fill="#000" textLength="18.59" lengthAdjust="spacingAndGlyphs" style="font-size:8.3px;font-weight:bold;stroke:#ffe58e;stroke-width:0.2px;">CMS</text>
<text x="599.05" y="407.60" fill="#000" textLength="22.73" lengthAdjust="spacingAndGlyphs" style="font-size:8.3px;font-weight:bold;stroke:#ffe58e;stroke-width:0.2px;">LHCb</text>
<text x="6.69" y="468.00" fill="#ffff00" textLength="277.61" lengthAdjust="spacingAndGlyphs" style="font-size:14.8px;">Comments (21-Jul-2025 04:30:57)</text>
<text x="125.93" y="508.75" fill="#fff" textLength="168.14" lengthAdjust="spacingAndGlyphs" style="font-size:14.6px;">*** Stable beams ***</text>
<text x="147.50" y="547.00" fill="#fff" textLength="126.35" lengthAdjust="spacingAndGlyphs" style="font-size:14.6px;">All IPs on target</text>
<text x="155.43" y="585.00" fill="#fff" textLength="110.17" lengthAdjust="spacingAndGlyphs" style="font-size:14.6px;">XRPs inserted</text>
<text x="420.74" y="446.50" fill="#fff" textLength="172.33" lengthAdjust="spacingAndGlyphs" style="font-size:13.4px;">BIS status and SMP flags</text>
<text x="721.40" y="446.50" fill="#fff" textLength="19.90" lengthAdjust="spacingAndGlyphs" style="font-size:13.4px;">B1</text>
<text x="457.22" y="468.75" fill="#fff" textLength="199.86" lengthAdjust="spacingAndGlyphs" style="font-size:13.6px;">Link Status of Beam Permits</text>
<text x="711.19" y="468.75" fill="#000" textLength="29.75" lengthAdjust="spacingAndGlyphs" style="font-size:13.6px;">true</text>
<text x="768.94" y="468.75" fill="#000" textLength="29.75" lengthAdjust="spacingAndGlyphs" style="font-size:13.6px;">true</text>
<text x="485.28" y="491.75" fill="#fff" textLength="142.79" lengthAdjust="spacingAndGlyphs" style="font-size:13.6px;">Global Beam Permit</text>
<text x="711.19" y="491.75" fill="#000" textLength="29.75" lengthAdjust="spacingAndGlyphs" style="font-size:13.6px;">true</text>
<text x="768.94" y="491.75" fill="#000" textLength="29.75" lengthAdjust="spacingAndGlyphs" style="font-size:13.6px;">true</text>
<text x="513.40" y="514.75" fill="#fff" textLength="87.05" lengthAdjust="spacingAndGlyphs" style="font-size:13.6px;">Setup Beam</text>
<text x="709.34" y="514.75" fill="#000" textLength="33.42" lengthAdjust="spacingAndGlyphs" style="font-size:13.6px;">false</text>
<text x="767.09" y="514.75" fill="#000" textLength="33.42" lengthAdjust="spacingAndGlyphs" style="font-size:13.6px;">false</text>
<text x="502.22" y="537.75" fill="#fff" textLength="109.92" lengthAdjust="spacingAndGlyphs" style="font-size:13.6px;">Beam Presence</text>
<text x="711.19" y="537.75" fill="#000" textLength="29.75" lengthAdjust="spacingAndGlyphs" style="font-size:13.6px;">true</text>
<text x="768.94" y="537.75" fill="#000" textLength="29.75" lengthAdjust="spacingAndGlyphs" style="font-size:13.6px;">true</text>
<text x="451.70" y="560.75" fill="#fff" textLength="209.75" lengthAdjust="spacingAndGlyphs" style="font-size:13.6px;">Moveable Devices Allowed In</text>
<text x="711.19" y="560.75" fill="#000" textLength="29.75" lengthAdjust="spacingAndGlyphs" style="font-size:13.6px;">true</text>
<text x="768.94" y="560.75" fill="#000" textLength="29.75" lengthAdjust="spacingAndGlyphs" style="font-size:13.6px;">true</text>
<text x="508.92" y="583.75" fill="#fff" textLength="95.65" lengthAdjust="spacingAndGlyphs" style="font-size:13.6px;">Stable Beams</text>
<text x="711.19" y="583.75" fill="#000" textLength="29.75" lengthAdjust="spacingAndGlyphs" style="font-size:13.6px;">true</text>
<text x="768.94" y="583.75" fill="#000" textLength="29.75" lengthAdjust="spacingAndGlyphs" style="font-size:13.6px;">true</text>
<text x="12.50" y="610.75" fill="#ffff00" textLength="344.22" lengthAdjust="spacingAndGlyphs" style="font-size:13.2px;">AFS: 25ns_2460b_2448_2089_2227_144bpi_20inj</text>
<text x="417.23" y="610.75" fill="#fff" textLength="92.98" lengthAdjust="spacingAndGlyphs" style="font-size:13.4px;">PM Status B1</text>
<text x="620.23" y="610.75" fill="#fff" textLength="93.12" lengthAdjust="spacingAndGlyphs" style="font-size:13.4px;">PM Status B2</text>
<text x="535.46" y="610.75" fill="#000" textLength="67.51" lengthAdjust="spacingAndGlyphs" style="font-size:13.4px;">ENABLED</text>
<text x="738.46" y="610.75" fill="#000" textLength="67.51" lengthAdjust="spacingAndGlyphs" style="font-size:13.4px;">ENABLED</text>
<text x="773.96" y="446.50" fill="#fff" textLength="18.91" lengthAdjust="spacingAndGlyphs" style="font-size:13.4px;">B2</text>
</g>
</svg>
</body>
</html>
